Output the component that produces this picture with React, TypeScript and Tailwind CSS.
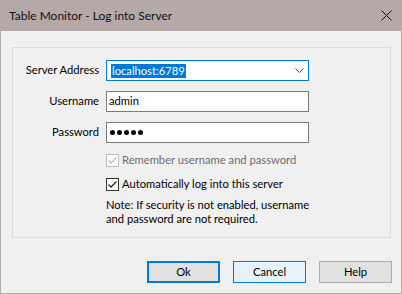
import React from "react";

function Check({ disabled }: { disabled?: boolean }) {
  const c = disabled ? "#bcbcbc" : "#333333";
  return (
    <svg width="13" height="13" viewBox="0 0 13 13" className="shrink-0">
      <rect x="0.5" y="0.5" width="12" height="12" fill="#ffffff" stroke={c} />
      <path d="M2.5 6.5 L5 9 L10.5 3.5" fill="none" stroke={disabled ? "#bcbcbc" : "#222222"} strokeWidth="1.3" />
    </svg>
  );
}

export default function App() {
  return (
    <div
      className="w-[402px] h-[294px] bg-[#b4a9a7] flex flex-col text-[11.2px] text-black"
      style={{ fontFamily: 'Lato, "Noto Sans", sans-serif' }}
    >
      <div className="h-[31px] flex items-center justify-between pl-[9px] pr-[10px] shrink-0">
        <span className="text-[12px] text-[#111]">Table Monitor - Log into Server</span>
        <svg width="11" height="11" viewBox="0 0 11 11">
          <path d="M0.5 0.5 L10.5 10.5 M10.5 0.5 L0.5 10.5" stroke="#111" strokeWidth="1" />
        </svg>
      </div>
      <div className="mx-[1px] mb-[1px] flex-1 bg-[#f0f0f0] flex flex-col">
        <div className="ml-[11px] mt-[16px] w-[379px] h-[191px] border border-[#dcdcdc] flex flex-col pt-[12px]">
          <div className="flex items-center h-[21px]">
            <div className="w-[86px] text-right whitespace-nowrap">Server Address</div>
            <div className="ml-[7px] w-[203px] h-[21px] bg-white border border-[#0078d7] flex items-center pl-[4px] pr-[4px]">
              <span className="bg-[#0078d7] text-white leading-[14px] h-[14px] px-[1px] whitespace-nowrap">localhost:6789</span>
              <div className="flex-1" />
              <svg width="9" height="5" viewBox="0 0 9 5">
                <path d="M0.5 0.5 L4.5 4.5 L8.5 0.5" fill="none" stroke="#444" strokeWidth="1" />
              </svg>
            </div>
          </div>
          <div className="flex items-center h-[21px] mt-[10px]">
            <div className="w-[86px] text-right">Username</div>
            <div className="ml-[7px] w-[203px] h-[21px] bg-white border border-[#7a7a7a] flex items-center pl-[2px]">
              admin
            </div>
          </div>
          <div className="flex items-center h-[21px] mt-[10px]">
            <div className="w-[86px] text-right">Password</div>
            <div className="ml-[7px] w-[203px] h-[21px] bg-white border border-[#7a7a7a] flex items-center pl-[3px] gap-[2px]">
              <span className="w-[5px] h-[5px] rounded-full bg-black" />
              <span className="w-[5px] h-[5px] rounded-full bg-black" />
              <span className="w-[5px] h-[5px] rounded-full bg-black" />
              <span className="w-[5px] h-[5px] rounded-full bg-black" />
              <span className="w-[5px] h-[5px] rounded-full bg-black" />
            </div>
          </div>
          <div className="flex items-center h-[14px] mt-[10px] ml-[93px] gap-[3px]">
            <Check disabled />
            <span className="text-[#6d6d6d] whitespace-nowrap">Remember username and password</span>
          </div>
          <div className="flex items-center h-[14px] mt-[10px] ml-[93px] gap-[3px]">
            <Check />
            <span className="whitespace-nowrap">Automatically log into this server</span>
          </div>
          <div className="ml-[93px] mt-[7px] leading-[14px] whitespace-nowrap">
            Note: If security is not enabled, username
            <br />
            and password are not required.
          </div>
        </div>
        <div className="flex mt-[23px] ml-[146px] gap-[13px]">
          <button className="w-[73px] h-[22px] bg-[#e1e1e1] border-2 border-[#0078d7] flex items-center justify-center">
            Ok
          </button>
          <button className="w-[73px] h-[22px] bg-[#e5f1fb] border border-[#0078d7] flex items-center justify-center">
            Cancel
          </button>
          <button className="w-[73px] h-[22px] bg-[#e1e1e1] border border-[#adadad] flex items-center justify-center">
            Help
          </button>
        </div>
      </div>
    </div>
  );
}
